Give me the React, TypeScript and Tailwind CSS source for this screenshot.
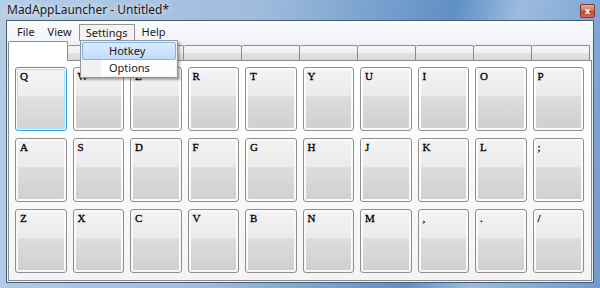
const rows = [
  ["Q", "W", "E", "R", "T", "Y", "U", "I", "O", "P"],
  ["A", "S", "D", "F", "G", "H", "J", "K", "L", ";"],
  ["Z", "X", "C", "V", "B", "N", "M", ",", ".", "/"],
];

const menus = ["File", "View", "Settings", "Help"];

function Key({ label, focused }: { label: string; focused?: boolean }) {
  return (
    <div
      className={
        "h-[64px] rounded-[3px] border p-[1px] " +
        (focused ? "border-[#3c9ad8]" : "border-[#8f8f8f]")
      }
    >
      <div
        className={
          "h-full rounded-[2px] pl-[3px] pt-[1px] text-[11px] leading-[12px] text-black [-webkit-text-stroke:0.3px_#000] " +
          (focused
            ? "bg-[linear-gradient(to_bottom,#f4f4f4_0%,#eeeeee_45%,#e0e0e0_46%,#d4d4d4_100%)] shadow-[inset_0_0_0_1px_#a8e2fb]"
            : "bg-[linear-gradient(to_bottom,#f2f2f2_0%,#ebebeb_45%,#dddddd_46%,#cfcfcf_100%)] shadow-[inset_0_0_0_1px_#fbfbfb]")
        }
        style={{ fontFamily: '"Liberation Serif", serif' }}
      >
        {label}
      </div>
    </div>
  );
}

export default function App() {
  return (
    <div
      className="relative flex h-[288px] w-[600px] flex-col overflow-hidden bg-[linear-gradient(100deg,#b6cde6_0%,#9fbcdc_40%,#5f8fc4_70%,#9cbbe0_80%,#6f9bcc_100%)] text-[12px]"
      style={{ fontFamily: '"Noto Sans", "Open Sans", sans-serif' }}
    >
      {/* title bar */}
      <div className="flex h-[20px] items-center justify-between pl-[7px] pr-[5px]">
        <span className="text-[12px] leading-none text-[#1a1a1a] [text-shadow:0_0_6px_#ffffff]">
          MadAppLauncher - Untitled*
        </span>
        <div className="mt-[1px] flex h-[14px] w-[15px] items-center justify-center rounded-[2px] border border-[#7a3a30] bg-[linear-gradient(to_bottom,#e9a99c_0%,#d0705c_50%,#c7452a_51%,#d86a4e_100%)]">
          <span className="text-[9px] font-bold leading-none text-white">x</span>
        </div>
      </div>

      {/* client area */}
      <div className="mx-[6px] mb-[5px] flex flex-1 flex-col border border-[#4d5d70] bg-[#f0f0f0]">
        {/* menu bar */}
        <div className="flex h-[20px] items-end gap-[1px] bg-[linear-gradient(to_bottom,#fafbfd,#f1f4f9)] pl-[4px] text-[11px]">
          {menus.map((m) => (
            <div
              key={m}
              className={
                "flex h-[17px] items-center px-[6px] text-[#1a1a1a] " +
                (m === "Settings"
                  ? "border border-b-0 border-[#959595] bg-[#f3f3f3] px-[5px]"
                  : "")
              }
            >
              {m}
            </div>
          ))}
        </div>

        {/* tabs */}
        <div className="flex h-[19px] items-end pl-[1px]">
          <div className="z-10 -mb-[1px] h-[20px] w-[60px] rounded-t-[2px] border border-b-0 border-[#898c95] bg-white" />
          {Array.from({ length: 9 }).map((_, i) => (
            <div
              key={i}
              className="h-[15px] w-[58px] rounded-t-[2px] border border-b-0 border-l-0 border-[#898c95] bg-[linear-gradient(to_bottom,#f7f7f7_0%,#f0f0f0_50%,#e3e3e3_51%,#d8d8d8_100%)]"
            />
          ))}
        </div>

        {/* tab panel */}
        <div className="mb-[1px] ml-[1px] mr-[1px] flex-1 border border-[#898c95] bg-[linear-gradient(to_bottom,#ffffff,#f4f4f4)] pl-[6px] pr-[7px] pt-[6px]">
          <div className="grid grid-cols-10 gap-x-[6px] gap-y-[7px]">
            {rows.flat().map((k, i) => (
              <Key key={k} label={k} focused={i === 0} />
            ))}
          </div>
        </div>
      </div>

      {/* settings dropdown */}
      <div className="absolute left-[80px] top-[40px] z-20 h-[38px] w-[98px] border border-[#979797] bg-[#f0f0f0] p-[1px] text-[11px] shadow-[2px_2px_2px_rgba(0,0,0,0.3)]">
        <div className="flex h-full flex-col bg-[linear-gradient(to_right,#f1f1f1_0px,#f1f1f1_18px,#e2e3e3_18px,#ffffff_19px,#fcfcfc_100%)]">
          <div className="flex h-[18px] items-center rounded-[2px] border border-[#7eb4ea] bg-[linear-gradient(to_bottom,#dcebfc,#c1dbfc)] pl-[26px] text-[#1a1a1a]">
            Hotkey
          </div>
          <div className="flex h-[18px] items-center pl-[27px] text-[#1a1a1a]">Options</div>
        </div>
      </div>
    </div>
  );
}
